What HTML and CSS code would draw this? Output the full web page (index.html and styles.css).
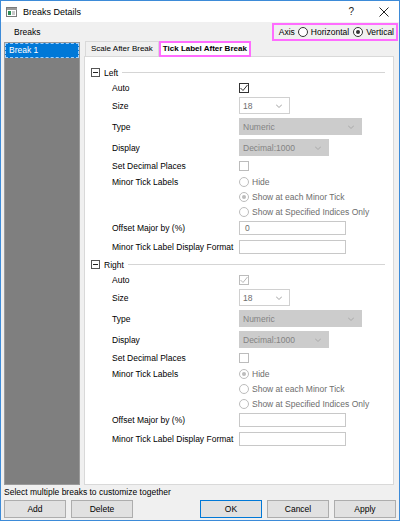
FILE: index.html
```html
<!DOCTYPE html>
<html lang="en">
<head>
<meta charset="UTF-8">
<title>Breaks Details</title>
<link rel="stylesheet" href="styles.css">
</head>
<body>
<div class="window">
    <div class="titlebar">
        <svg class="app_icon" width="11" height="10" viewBox="0 0 11 10">
            <rect x="0.5" y="0.5" width="10" height="9" fill="#fff" stroke="#7a7a7a"/>
            <rect x="1" y="1" width="10" height="2" fill="#9a9a9a"/>
            <rect x="2" y="4" width="3" height="4" fill="#2e8b57"/>
            <rect x="6" y="4" width="3" height="4" fill="#c8c8c8"/>
        </svg>
        <span class="title">Breaks Details</span>
        <span class="tb_help">?</span>
        <svg class="tb_close" width="10" height="10" viewBox="0 0 10 10">
            <path d="M0.5 0.5 L9.5 9.5 M9.5 0.5 L0.5 9.5" stroke="#222" stroke-width="1"/>
        </svg>
    </div>

    <div class="topbar">
        <span class="menu">Breaks</span>
        <div class="axis_box">
            <span>Axis</span>
            <span class="opt"><span class="radio"></span>Horizontal</span>
            <span class="opt"><span class="radio on"></span>Vertical</span>
        </div>
    </div>

    <div class="main">
        <ul class="break_list">
            <li class="selected">Break 1</li>
        </ul>

        <div class="tabs">
            <div class="tab_head">
                <span class="tab">Scale After Break</span>
                <span class="tab active">Tick Label After Break</span>
            </div>
            <div class="tab_panel">

                <div class="section">
                    <div class="sec_head">
                        <svg width="9" height="9" viewBox="0 0 9 9"><rect x="0.5" y="0.5" width="8" height="8" fill="#fff" stroke="#555"/><path d="M2 4.5 H7" stroke="#222"/></svg>
                        <span>Left</span>
                        <span class="sec_line"></span>
                    </div>
                    <div class="row r_auto"><span class="lbl">Auto</span><span class="check"><svg width="8" height="8" viewBox="0 0 8 8"><path d="M0.5 4 L3 6.5 L7.5 1" fill="none" stroke="#333" stroke-width="1"/></svg></span></div>
                    <div class="row r_size"><span class="lbl">Size</span><span class="select w_size">18<svg width="6" height="4" viewBox="0 0 6 4"><path d="M0 0.5 L3 3.5 L6 0.5" fill="none" stroke="#a0a0a0"/></svg></span></div>
                    <div class="row r_type"><span class="lbl">Type</span><span class="select off w_type">Numeric<svg width="6" height="4" viewBox="0 0 6 4"><path d="M0 0.5 L3 3.5 L6 0.5" fill="none" stroke="#a8a8a8"/></svg></span></div>
                    <div class="row r_disp"><span class="lbl">Display</span><span class="select off w_disp">Decimal:1000<svg width="6" height="4" viewBox="0 0 6 4"><path d="M0 0.5 L3 3.5 L6 0.5" fill="none" stroke="#a8a8a8"/></svg></span></div>
                    <div class="row r_dec"><span class="lbl">Set Decimal Places</span><span class="check off"></span></div>
                    <div class="row r_radio"><span class="lbl">Minor Tick Labels</span><span class="opt dim"><span class="radio off"></span>Hide</span></div>
                    <div class="row r_radio"><span class="lbl"></span><span class="opt dim"><span class="radio off on"></span>Show at each Minor Tick</span></div>
                    <div class="row r_radio"><span class="lbl"></span><span class="opt dim"><span class="radio off"></span>Show at Specified Indices Only</span></div>
                    <div class="row r_off"><span class="lbl">Offset Major by (%)</span><span class="input">0</span></div>
                    <div class="row r_fmt"><span class="lbl">Minor Tick Label Display Format</span><span class="input"></span></div>
                </div>

                <div class="section">
                    <div class="sec_head">
                        <svg width="9" height="9" viewBox="0 0 9 9"><rect x="0.5" y="0.5" width="8" height="8" fill="#fff" stroke="#555"/><path d="M2 4.5 H7" stroke="#222"/></svg>
                        <span>Right</span>
                        <span class="sec_line"></span>
                    </div>
                    <div class="row r_auto"><span class="lbl">Auto</span><span class="check off"><svg width="8" height="8" viewBox="0 0 8 8"><path d="M0.5 4 L3 6.5 L7.5 1" fill="none" stroke="#b8b8b8" stroke-width="1"/></svg></span></div>
                    <div class="row r_size"><span class="lbl">Size</span><span class="select w_size">18<svg width="6" height="4" viewBox="0 0 6 4"><path d="M0 0.5 L3 3.5 L6 0.5" fill="none" stroke="#a0a0a0"/></svg></span></div>
                    <div class="row r_type"><span class="lbl">Type</span><span class="select off w_type">Numeric<svg width="6" height="4" viewBox="0 0 6 4"><path d="M0 0.5 L3 3.5 L6 0.5" fill="none" stroke="#a8a8a8"/></svg></span></div>
                    <div class="row r_disp"><span class="lbl">Display</span><span class="select off w_disp">Decimal:1000<svg width="6" height="4" viewBox="0 0 6 4"><path d="M0 0.5 L3 3.5 L6 0.5" fill="none" stroke="#a8a8a8"/></svg></span></div>
                    <div class="row r_dec"><span class="lbl">Set Decimal Places</span><span class="check off"></span></div>
                    <div class="row r_radio"><span class="lbl">Minor Tick Labels</span><span class="opt dim"><span class="radio off on"></span>Hide</span></div>
                    <div class="row r_radio"><span class="lbl"></span><span class="opt dim"><span class="radio off"></span>Show at each Minor Tick</span></div>
                    <div class="row r_radio"><span class="lbl"></span><span class="opt dim"><span class="radio off"></span>Show at Specified Indices Only</span></div>
                    <div class="row r_off"><span class="lbl">Offset Major by (%)</span><span class="input"></span></div>
                    <div class="row r_fmt"><span class="lbl">Minor Tick Label Display Format</span><span class="input"></span></div>
                </div>

            </div>
        </div>
    </div>

    <div class="hint">Select multiple breaks to customize together</div>

    <div class="buttons">
        <span class="btn">Add</span>
        <span class="btn">Delete</span>
        <span class="spacer"></span>
        <span class="btn default">OK</span>
        <span class="btn">Cancel</span>
        <span class="btn">Apply</span>
    </div>
</div>
</body>
</html>
```

FILE: styles.css
```css
* {margin: 0; padding: 0; box-sizing: border-box;}
li {list-style: none;}
body {
    font-family: "Liberation Sans", Arial, sans-serif;
    font-size: 8.5px;
    color: #000;
    background: #fff;
}
.window {
    width: 400px;
    height: 521px;
    border: 1px solid #3d8bd8;
    background: #f0f0f0;
    display: flex;
    flex-direction: column;
}

/* title bar */
.titlebar {
    height: 21px;
    background: #fff;
    display: flex;
    align-items: center;
    padding-left: 5px;
}
.titlebar .title {
    margin-left: 6px;
    font-size: 9px;
}
.titlebar .tb_help {
    margin-left: auto;
    font-size: 10px;
    color: #222;
}
.titlebar .tb_close {
    margin: 0 10px 0 25px;
}

/* menu + axis */
.topbar {
    height: 19px;
    display: flex;
    align-items: center;
    justify-content: space-between;
    padding-left: 13px;
    padding-right: 1px;
}
.axis_box {
    height: 18px;
    border: 2px solid #ff6cff;
    display: flex;
    align-items: center;
    gap: 3px;
    padding: 0 2px 0 5px;
    margin-top: 1px;
}
.opt {
    display: flex;
    align-items: center;
    gap: 3px;
    white-space: nowrap;
}
.axis_box .opt + .opt {margin-left: 1px;}
.opt.dim {color: #6d6d6d;}
.radio {
    width: 10px;
    height: 10px;
    border: 1px solid #333;
    border-radius: 50%;
    background: #fff;
    display: inline-flex;
    align-items: center;
    justify-content: center;
}
.radio.on::after {
    content: "";
    width: 4px;
    height: 4px;
    border-radius: 50%;
    background: #333;
}
.radio.off {border-color: #bcbcbc;}
.radio.off.on::after {background: #bcbcbc;}

/* main area */
.main {
    height: 444px;
    display: flex;
    padding: 0 5px 0 3px;
    gap: 4px;
}
.break_list {
    width: 76px;
    margin-top: 1px;
    background: #7f7f7f;
    border: 1px solid #9a9a9a;
}
.break_list li {
    height: 15px;
    line-height: 13px;
    padding-left: 3px;
    color: #fff;
    background: #0078d7;
    border: 1px dashed #9fd0ff;
}
.tabs {
    flex: 1;
    display: flex;
    flex-direction: column;
}
.tab_head {
    height: 15px;
    display: flex;
    align-items: flex-end;
    padding-left: 1px;
    position: relative;
    z-index: 1;
}
.tab {
    height: 15px;
    line-height: 14px;
    padding: 0 5px;
    font-size: 8px;
    border: 1px solid #d9d9d9;
    border-bottom: none;
    background: #f0f0f0;
}
.tab.active {
    height: 16px;
    margin-bottom: -1px;
    background: #fff;
    font-weight: bold;
    border: 2px solid #ff6cff;
    line-height: 12px;
    padding: 0 2px;
}
.tab_panel {
    flex: 1;
    background: #fff;
    border: 1px solid #d9d9d9;
    padding: 8px 8px 0 6px;
}
.section {margin-bottom: 1px;}
.sec_head {
    height: 15px;
    display: flex;
    align-items: center;
    gap: 3px;
}
.sec_head span:nth-child(2) {margin-left: 1px;}
.sec_line {
    flex: 1;
    height: 1px;
    background: #d5d5d5;
    margin-left: 1px;
}
.row {
    display: flex;
    align-items: center;
    padding-left: 21px;
}
.row .lbl {
    width: 127px;
    flex-shrink: 0;
    white-space: nowrap;
}
.r_auto {height: 15px;}
.r_size {height: 21px;}
.r_type {height: 21px;}
.r_disp {height: 21px;}
.r_dec {height: 16px;}
.r_radio {height: 15px;}
.r_off {height: 18px;}
.r_fmt {height: 19px;}

.check {
    width: 10px;
    height: 10px;
    border: 1px solid #333;
    background: #fff;
    display: flex;
    align-items: center;
    justify-content: center;
}
.check.off {border-color: #bcbcbc;}
.select {
    height: 17px;
    border: 1px solid #d0d0d0;
    background: #fff;
    color: #6d6d6d;
    display: flex;
    align-items: center;
    justify-content: space-between;
    padding: 0 7px 0 3px;
}
.select.off {
    background: #cccccc;
    border-color: #cccccc;
    color: #838383;
}
.w_size {width: 51px;}
.w_type {width: 123px;}
.w_disp {width: 90px;}
.input {
    width: 107px;
    height: 14px;
    border: 1px solid #c8c8c8;
    color: #6d6d6d;
    padding-left: 5px;
    line-height: 12px;
}

/* footer */
.hint {
    height: 14px;
    line-height: 14px;
    padding-left: 3px;
}
.buttons {
    display: flex;
    padding: 1px 3px 0 3px;
    gap: 5px;
}
.spacer {flex: 1;}
.btn {
    width: 62px;
    height: 18px;
    line-height: 16px;
    text-align: center;
    background: #e1e1e1;
    border: 1px solid #adadad;
}
.btn.default {border-color: #0078d7;}
```
